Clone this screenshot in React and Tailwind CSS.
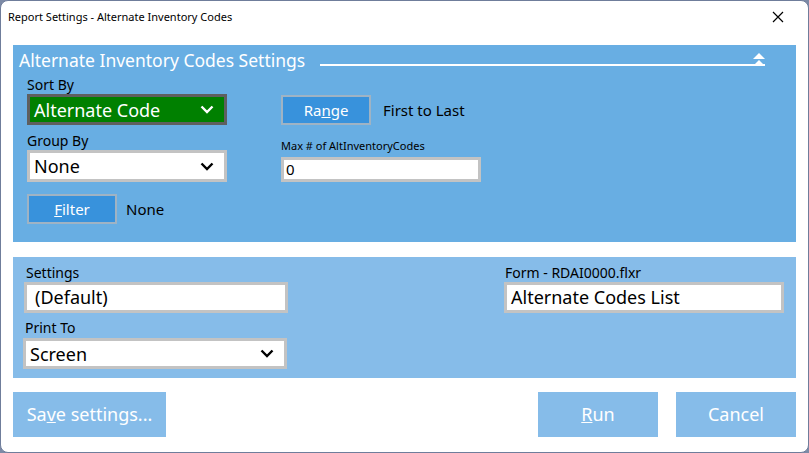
import React from 'react';

const FONT = { fontFamily: '"Noto Sans", "Open Sans", sans-serif' };

function Chevron({ color = '#000' }) {
  return (
    <svg width="14" height="9" viewBox="0 0 14 9">
      <polyline points="1.5,1.5 7,7 12.5,1.5" fill="none" stroke={color} strokeWidth="2.4" />
    </svg>
  );
}

function CollapseIcon() {
  return (
    <svg width="14" height="13" viewBox="0 0 14 13">
      <polygon points="7,0 13,6 1,6" fill="#fff" />
      <polygon points="7,7 12,12 2,12" fill="#fff" />
      <rect x="1" y="11" width="12" height="2" fill="#fff" />
    </svg>
  );
}

function Select({ value, className, chevron, border }) {
  return (
    <div className={`flex items-center justify-between pl-[4px] pr-[10px] border-[3px] ${border} ${className}`}>
      <span className="text-[18px] leading-none">{value}</span>
      <Chevron color={chevron} />
    </div>
  );
}

function BlueButton({ children, className = '' }) {
  return (
    <div className={`flex items-center justify-center bg-[#3892dc] border-2 border-[#9fb3c4] text-white text-[15px] ${className}`}>
      {children}
    </div>
  );
}

export default function App() {
  return (
    <div style={FONT} className="w-[809px] h-[453px] bg-[#7c8aa6]">
      <div className="w-full h-full bg-white border border-[#6f7d9b] rounded-[8px] flex flex-col overflow-hidden text-black">
        <div className="h-[32px] flex items-center justify-between pl-[7px] pr-[24px] text-[11px]">
          <span>Report Settings - Alternate Inventory Codes</span>
          <svg width="12" height="12" viewBox="0 0 12 12">
            <path d="M1 1 L11 11 M11 1 L1 11" stroke="#000" strokeWidth="1.2" />
          </svg>
        </div>

        <div className="mt-[12px] mx-[12px] h-[197px] bg-[#68aee3] flex flex-col">
          <div className="h-[32px] flex items-center pl-[6px] pr-[30px]">
            <span className="text-white text-[17.5px] leading-none">Alternate Inventory Codes Settings</span>
            <div className="flex-1 h-[2px] bg-white ml-[15px] mt-[8px]" />
            <div className="-ml-[1px] mt-[-4px]">
              <CollapseIcon />
            </div>
          </div>
          <div className="flex pl-[14px]">
            <div className="w-[254px] flex flex-col">
              <div className="h-[16px] leading-[16px] text-[14px]">Sort By</div>
              <Select
                value="Alternate Code"
                className="mt-[1px] w-[200px] h-[31px] bg-[#008000] text-white"
                border="border-[#5f5f5f]"
                chevron="#fff"
              />
              <div className="mt-[8px] h-[16px] leading-[16px] text-[14px]">Group By</div>
              <Select
                value="None"
                className="mt-[1px] w-[200px] h-[32px] bg-white"
                border="border-[#c3c3c3]"
                chevron="#000"
              />
              <div className="mt-[12px] flex items-center">
                <BlueButton className="w-[90px] h-[30px]">
                  <span><u>F</u>ilter</span>
                </BlueButton>
                <span className="ml-[9px] text-[15px]">None</span>
              </div>
            </div>
            <div className="flex flex-col">
              <div className="mt-[18px] flex items-center">
                <BlueButton className="w-[90px] h-[30px]">
                  <span>Ra<u>n</u>ge</span>
                </BlueButton>
                <span className="ml-[12px] text-[15px]">First to Last</span>
              </div>
              <div className="mt-[14px] h-[13px] leading-[13px] text-[11px]">Max # of AltInventoryCodes</div>
              <div className="mt-[5px] w-[200px] h-[25px] bg-white border-[3px] border-[#c3c3c3] flex items-center pl-[2px] text-[15px]">
                0
              </div>
            </div>
          </div>
        </div>

        <div className="mt-[15px] mx-[12px] h-[121px] bg-[#86bce9] flex justify-between pt-[8px] pl-[11px] pr-[12px]">
          <div className="flex flex-col">
            <div className="pl-[2px] h-[16px] leading-[16px] text-[14px]">Settings</div>
            <div className="mt-[1px] w-[264px] h-[31px] bg-white border-[3px] border-[#c3c3c3] flex items-center pl-[8px] text-[18px]">
              (Default)
            </div>
            <div className="mt-[7px] pl-[1px] h-[16px] leading-[16px] text-[14px]">Print To</div>
            <Select
              value="Screen"
              className="mt-[2px] w-[264px] h-[31px] bg-white -ml-[1px]"
              border="border-[#c3c3c3]"
              chevron="#000"
            />
          </div>
          <div className="flex flex-col">
            <div className="pl-[1px] h-[16px] leading-[16px] text-[14px]">Form - RDAI0000.flxr</div>
            <div className="mt-[1px] w-[280px] h-[31px] bg-white border-[3px] border-[#c3c3c3] flex items-center pl-[4px] text-[18px]">
              Alternate Codes List
            </div>
          </div>
        </div>

        <div className="mt-[14px] mx-[12px] h-[45px] flex text-white text-[18px]">
          <div className="w-[153px] h-full bg-[#86bce9] flex items-center justify-center">
            <span>Sa<u>v</u>e settings...</span>
          </div>
          <div className="flex-1" />
          <div className="w-[120px] h-full bg-[#86bce9] flex items-center justify-center">
            <span><u>R</u>un</span>
          </div>
          <div className="ml-[18px] w-[120px] h-full bg-[#86bce9] flex items-center justify-center">
            Cancel
          </div>
        </div>
      </div>
    </div>
  );
}
